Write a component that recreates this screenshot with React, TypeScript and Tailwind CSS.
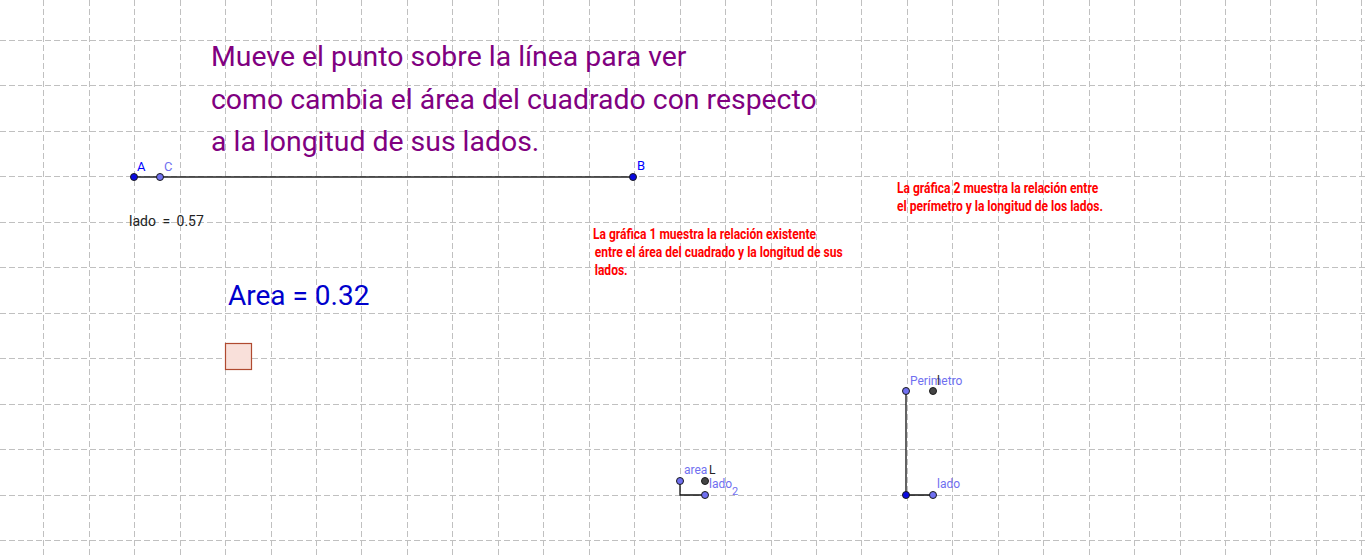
import React from "react";

const UNIT = 45.45;
const X0 = 43.3;
const Y0 = 40;
const W = 1366;
const H = 558;

const vLines = Array.from({ length: 30 }, (_, i) => Math.round(X0 + i * UNIT) + 0.5);
const hLines = Array.from({ length: 12 }, (_, i) => Math.round(Y0 + i * UNIT) + 0.5);

function Pt({ x, y, fill }: { x: number; y: number; fill: string }) {
  return <circle cx={x} cy={y} r={3.5} fill={fill} stroke="#1a1a1a" strokeWidth={1} />;
}

export default function App() {
  const dark = "#0a0ae0";
  const light = "#7070f0";
  const black = "#444444";

  return (
    <div
      className="relative w-full h-[558px] bg-white overflow-hidden"
      style={{ fontFamily: "Roboto, 'Liberation Sans', sans-serif" }}
    >
      <svg className="absolute inset-0" width={W} height={H}>
        {/* grid */}
        <g stroke="#c0c0c0" strokeWidth={1} strokeDasharray="6 3" shapeRendering="crispEdges">
          {vLines.map((x) => (
            <line key={"v" + x} x1={x} y1={0} x2={x} y2={H} />
          ))}
          {hLines.map((y) => (
            <line key={"h" + y} x1={0} y1={y} x2={W} y2={y} />
          ))}
        </g>

        {/* segment AB */}
        <line x1={134} y1={177} x2={633} y2={177} stroke="#222" strokeWidth={1.3} />
        <Pt x={134} y={177} fill={dark} />
        <Pt x={160} y={177} fill={light} />
        <Pt x={633} y={177} fill={dark} />

        {/* square */}
        <rect x={225.5} y={343.5} width={26} height={26} fill="#f9e0da" stroke="#b04a30" strokeWidth={1.2} />

        {/* area graph */}
        <polyline points="680,481 680,495 705,495" fill="none" stroke="#111" strokeWidth={1.3} />
        <Pt x={680} y={481} fill={light} />
        <Pt x={705} y={495} fill={light} />
        <Pt x={705} y={481} fill={black} />

        {/* perimetro graph */}
        <polyline points="906,391 906,495 933,495" fill="none" stroke="#111" strokeWidth={1.3} />
        <Pt x={906} y={391} fill={light} />
        <Pt x={933} y={391} fill={black} />
        <Pt x={906} y={495} fill={dark} />
        <Pt x={933} y={495} fill={light} />
      </svg>

      {/* title text */}
      <div className="absolute left-[211px] top-[36px] text-[28.4px] leading-[42.5px] text-[#800080] whitespace-nowrap">
        <div>Mueve el punto sobre la línea para ver</div>
        <div>como cambia el área del cuadrado con respecto</div>
        <div>a la longitud de sus lados.</div>
      </div>

      {/* point labels */}
      <div className="absolute left-[137px] top-[159px] text-[13px] leading-[15px] text-[#0000ff]">A</div>
      <div className="absolute left-[164px] top-[159px] text-[13px] leading-[15px] text-[#7070f0]">C</div>
      <div className="absolute left-[637px] top-[158px] text-[13px] leading-[15px] text-[#0000ff]">B</div>

      <div className="absolute left-[129px] top-[213px] text-[14px] leading-[16px] text-[#222] whitespace-nowrap">
        lado <span className="mx-[3px]">=</span> 0.57
      </div>

      <div className="absolute left-[228px] top-[281px] text-[28px] leading-[30px] text-[#0000cc] whitespace-nowrap">
        Area = 0.32
      </div>

      {/* red notes */}
      <div className="absolute left-[593px] top-[225px] text-[14px] leading-[18px] font-bold text-[#ff0000] whitespace-nowrap origin-left scale-x-[0.86]">
        <div>La gráfica 1 muestra la relación existente</div>
        <div className="pl-[2px]">entre el área del cuadrado y la longitud de sus</div>
        <div className="pl-[2px]">lados.</div>
      </div>
      <div className="absolute left-[897px] top-[179px] text-[14px] leading-[18px] font-bold text-[#ff0000] whitespace-nowrap origin-left scale-x-[0.86]">
        <div>La gráfica 2 muestra la relación entre</div>
        <div>el perímetro y la longitud de los lados.</div>
      </div>

      {/* graph labels */}
      <div className="absolute left-[684px] top-[463px] text-[12px] leading-[14px] text-[#7070f0]">area</div>
      <div className="absolute left-[709px] top-[463px] text-[12px] leading-[14px] text-[#222]">L</div>
      <div className="absolute left-[709px] top-[477px] text-[12px] leading-[14px] text-[#7070f0] whitespace-nowrap">
        lado<sub className="text-[11px] align-[-4px]">2</sub>
      </div>
      <div className="absolute left-[910px] top-[374px] text-[12px] leading-[14px] text-[#7070f0]">Perimetro</div>
      <div className="absolute left-[937px] top-[374px] text-[12px] leading-[14px] text-[#222]">l</div>
      <div className="absolute left-[937px] top-[477px] text-[12px] leading-[14px] text-[#7070f0]">lado</div>
    </div>
  );
}
